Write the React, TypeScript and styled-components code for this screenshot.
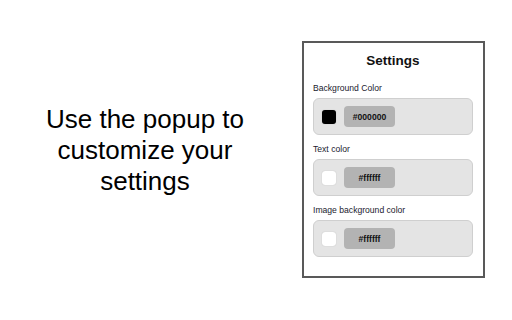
import styled, { createGlobalStyle } from "styled-components";

const GlobalStyle = createGlobalStyle`
  html, body {
    margin: 0;
    padding: 0;
    background: #fff;
    font-family: "Liberation Sans", Arial, sans-serif;
  }
`;

const Page = styled.div`
  width: 512px;
  height: 320px;
  display: flex;
  align-items: flex-start;
  overflow: hidden;
`;

const Intro = styled.div`
  width: 290px;
  height: 320px;
  display: flex;
  align-items: center;
  justify-content: center;
  padding-bottom: 20px;
  box-sizing: border-box;
`;

const IntroText = styled.p`
  margin: 0;
  font-size: 26px;
  line-height: 31px;
  text-align: center;
  color: #000;
`;

const Popup = styled.div`
  margin: 41px 0 0 12px;
  width: 183px;
  height: 237px;
  box-sizing: border-box;
  border: 2px solid #595959;
  padding: 0 10px 0 9px;
  display: flex;
  flex-direction: column;
`;

const Title = styled.h1`
  margin: 10px 0 8px;
  font-size: 13.5px;
  line-height: 16px;
  font-weight: bold;
  text-align: center;
  color: #111;
`;

const Field = styled.div`
  display: flex;
  flex-direction: column;
  margin-bottom: 3px;
`;

const Label = styled.label`
  font-size: 8.6px;
  line-height: 12px;
  color: #1a1a2e;
  margin: 5px 0 4px;
`;

const ColorBox = styled.div`
  height: 37px;
  box-sizing: border-box;
  border: 1px solid #cfcfcf;
  border-radius: 6px;
  background: #e4e4e4;
  display: flex;
  align-items: center;
  padding-left: 8px;
  gap: 8px;
`;

const Swatch = styled.span<{ $color: string }>`
  width: 14px;
  height: 14px;
  border-radius: 3px;
  background: ${(p) => p.$color};
  box-shadow: 0 0 1px rgba(0, 0, 0, 0.25);
`;

const Hex = styled.span`
  width: 51px;
  height: 21px;
  border-radius: 4px;
  background: #b3b3b3;
  display: flex;
  align-items: center;
  justify-content: center;
  font-size: 8.6px;
  font-weight: bold;
  color: #111;
`;

const fields = [
  { label: "Background Color", value: "#000000" },
  { label: "Text color", value: "#ffffff" },
  { label: "Image background color", value: "#ffffff" },
];

export default function App() {
  return (
    <>
      <GlobalStyle />
      <Page>
        <Intro>
          <IntroText>
            Use the popup to
            <br />
            customize your
            <br />
            settings
          </IntroText>
        </Intro>
        <Popup>
          <Title>Settings</Title>
          {fields.map((f) => (
            <Field key={f.label}>
              <Label>{f.label}</Label>
              <ColorBox>
                <Swatch $color={f.value} />
                <Hex>{f.value}</Hex>
              </ColorBox>
            </Field>
          ))}
        </Popup>
      </Page>
    </>
  );
}
